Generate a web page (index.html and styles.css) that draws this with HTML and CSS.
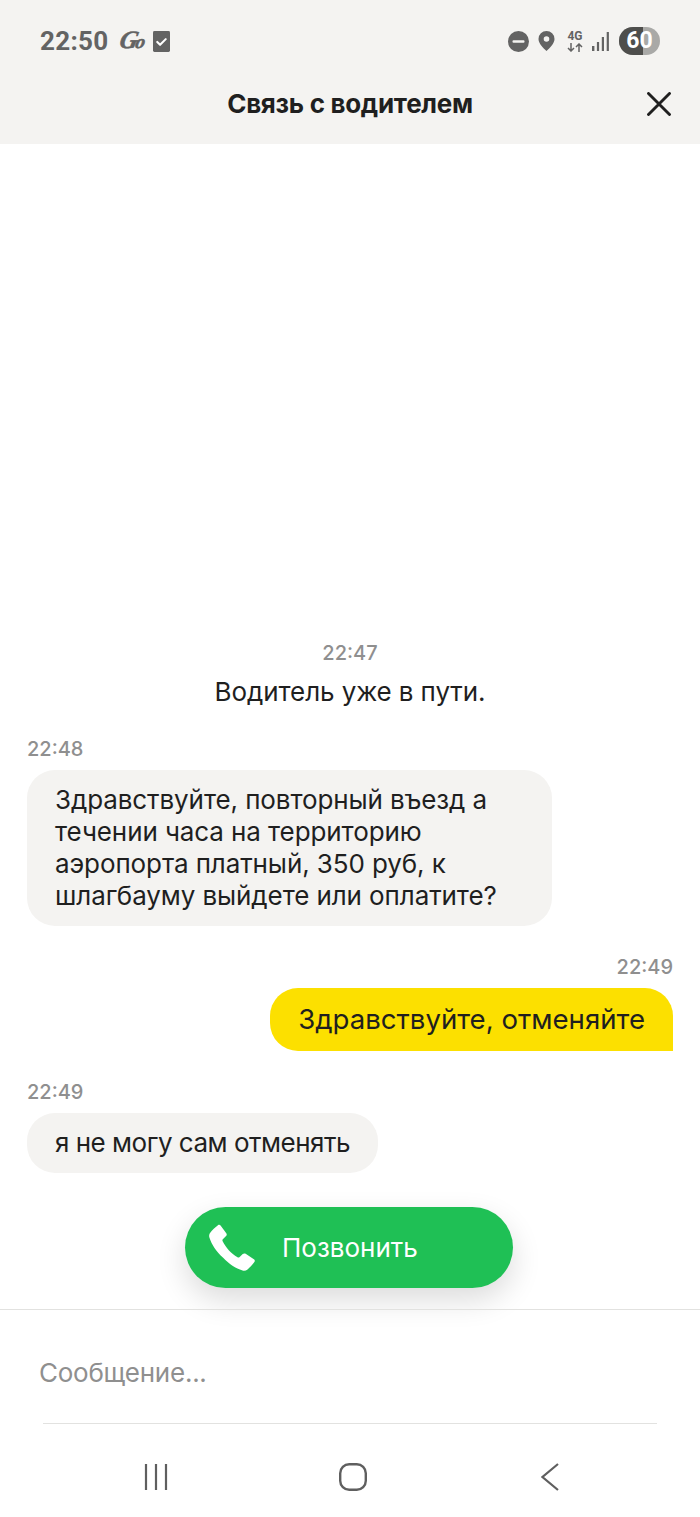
FILE: index.html
```html
<!DOCTYPE html>
<html lang="ru">
<head>
<meta charset="UTF-8" />
<meta name="viewport" content="width=device-width, initial-scale=1" />
<title>Связь с водителем</title>
<link rel="stylesheet" href="styles.css">
</head>
<body>

<div class="screen">
  <!-- Status bar + title -->
  <div class="top">
    <div class="status">
      <div class="status-left">
        <span class="clock">22:50</span>
        <span class="go">G<span class="go-o">o</span></span>
        <svg class="check" viewBox="0 0 18 22" xmlns="http://www.w3.org/2000/svg">
          <rect width="18" height="22" rx="1.5" fill="#636363"/>
          <path d="M4.5 11.5l3 3 6-6" fill="none" stroke="#fff" stroke-width="2.2" stroke-linecap="round" stroke-linejoin="round"/>
        </svg>
      </div>
      <div class="status-right">
        <svg class="ic-dnd" viewBox="0 0 21 21" xmlns="http://www.w3.org/2000/svg">
          <circle cx="10.500" cy="10.500" r="10.500" fill="#636363"/>
          <rect x="4.500" y="9.300" width="12" height="2.400" rx="1" fill="#f4f3f1"/>
        </svg>
        <svg class="ic-pin" viewBox="0 0 16 20" xmlns="http://www.w3.org/2000/svg">
          <path fill-rule="evenodd" d="M8 0a8 8 0 0 1 8 8c0 4.500-4.600 8.900-8 12C4.600 16.900 0 12.500 0 8a8 8 0 0 1 8-8zm0 5.200a2.800 2.800 0 1 0 0 5.600 2.800 2.800 0 0 0 0-5.600z" fill="#636363"/>
        </svg>
        <div class="net">
          <span class="net-label">4G</span>
          <svg class="ic-arrows" viewBox="0 0 16 9" xmlns="http://www.w3.org/2000/svg">
            <path d="M4 0v8M1 5l3 3 3-3M12 9V1M9 4l3-3 3 3" fill="none" stroke="#636363" stroke-width="1.500"/>
          </svg>
        </div>
        <svg class="ic-signal" viewBox="0 0 17 19" xmlns="http://www.w3.org/2000/svg">
          <rect x="0" y="14" width="2.400" height="5" fill="#636363"/>
          <rect x="4.900" y="10" width="2.200" height="9" fill="#636363"/>
          <rect x="9.800" y="5" width="2.200" height="14" fill="#636363"/>
          <rect x="14.700" y="0" width="2.200" height="19" fill="#636363"/>
        </svg>
        <div class="battery"><div class="battery-fill"></div><span class="battery-num">60</span></div>
      </div>
    </div>
    <div class="titlebar">
      <h1>Связь с водителем</h1>
      <svg class="close" viewBox="0 0 24 24" xmlns="http://www.w3.org/2000/svg">
        <path d="M1.500 1.500l21 21M22.500 1.500l-21 21" stroke="#1f1f1f" stroke-width="2.900" stroke-linecap="round"/>
      </svg>
    </div>
  </div>

  <!-- Chat -->
  <div class="chat">
    <div class="system">
      <div class="time">22:47</div>
      <p>Водитель уже в пути.</p>
    </div>

    <div class="msg first">
      <div class="time">22:48</div>
      <div class="bubble">Здравствуйте, повторный въезд а течении часа на территорию аэропорта платный, 350 руб, к шлагбауму выйдете или оплатите?</div>
    </div>

    <div class="msg mine">
      <div class="time">22:49</div>
      <div class="bubble">Здравствуйте, отменяйте</div>
    </div>

    <div class="msg last">
      <div class="time">22:49</div>
      <div class="bubble">я не могу сам отменять</div>
    </div>

    <button class="call">
      <svg class="ic-phone" viewBox="0 0 48 48" xmlns="http://www.w3.org/2000/svg">
        <path d="M10.500 1.200c.9-.7 2-.5 2.700.4l5.300 7.200c.7.900.6 2-.2 2.800l-3.100 3c-.5.5-.6 1.100-.3 1.800 1.700 3.300 3.600 6.200 6 8.800 2.500 2.700 5.200 4.900 8.400 6.800.6.400 1.300.3 1.800-.2l3.200-3c.8-.7 1.900-.8 2.800-.2l7.900 5.200c1 .6 1.200 1.800.5 2.700-1.900 2.600-4.300 5.300-6.600 7.100-1.400 1.100-3 1.500-4.800 1-6.500-1.800-13-6.200-18.600-12.100C9 26.600 4.300 19.500 2.300 13c-.5-1.700-.2-3.200.8-4.600 1.800-2.500 4.800-5.300 7.400-7.200z" fill="#fff"/>
      </svg>
      <span>Позвонить</span>
    </button>
  </div>

  <!-- Input + nav -->
  <div class="bottom">
    <div class="input-row">Сообщение...</div>
    <div class="nav">
      <svg class="nav-recent" viewBox="0 0 26 26" xmlns="http://www.w3.org/2000/svg">
        <path d="M2 0v26M12 0v26M22 0v26" stroke="#5f5f5f" stroke-width="2.200"/>
      </svg>
      <svg class="nav-home" viewBox="0 0 28 28" xmlns="http://www.w3.org/2000/svg">
        <rect x="1.200" y="1.200" width="25.600" height="25.600" rx="9" fill="none" stroke="#5f5f5f" stroke-width="2.400"/>
      </svg>
      <svg class="nav-back" viewBox="0 0 18 28" xmlns="http://www.w3.org/2000/svg">
        <path d="M17 1L1.500 14 17 27" fill="none" stroke="#5f5f5f" stroke-width="2.200"/>
      </svg>
    </div>
  </div>
</div>

</body>
</html>
```

FILE: styles.css
```css
* {
  box-sizing: border-box;
}
html, body {
  margin: 0;
  padding: 0;
  background: #fff;
}
body {
  font-family: 'Inter', 'Noto Sans', sans-serif;
  color: #1f1f1f;
}
.screen {
  width: 700px;
  height: 1517px;
  display: flex;
  flex-direction: column;
  overflow: hidden;
}
.top {
  background: #f4f3f1;
  height: 144px;
  flex: none;
}
.status {
  height: 82px;
  padding: 27px 40px 0;
  display: flex;
  justify-content: space-between;
  align-items: flex-start;
}
.status-left {
  display: flex;
  align-items: center;
  height: 26px;
  margin-top: 1px;
}
.clock {
  font-family: 'Roboto', sans-serif;
  font-size: 26px;
  font-weight: 700;
  color: #636363;
  letter-spacing: 0.3px;
}
.go {
  font-family: 'Liberation Serif', serif;
  font-style: italic;
  font-weight: 700;
  font-size: 25px;
  line-height: 26px;
  color: #636363;
  margin-left: 11px;
  width: 24px;
  letter-spacing: -2px;
  -webkit-text-stroke: 0.6px #636363;
  transform: skewX(-12deg);
}
.go-o {
  font-size: 19px;
}
.check {
  width: 17px;
  height: 21px;
  margin-left: 9px;
}
.status-right {
  display: flex;
  align-items: center;
  height: 28px;
}
.ic-dnd {
  width: 21px;
  height: 21px;
}
.ic-pin {
  width: 17px;
  height: 20px;
  margin-left: 9px;
}
.net {
  width: 16px;
  margin-left: 12px;
  display: flex;
  flex-direction: column;
  align-items: center;
}
.net-label {
  font-family: 'Roboto', sans-serif;
  font-weight: 700;
  font-size: 12px;
  line-height: 11px;
  color: #636363;
}
.ic-arrows {
  width: 16px;
  height: 9px;
  margin-top: 1px;
}
.ic-signal {
  width: 17px;
  height: 19px;
  margin-left: 9px;
}
.battery {
  position: relative;
  width: 41px;
  height: 28px;
  margin-left: 10px;
  border-radius: 14px;
  background: #a9a9a7;
  overflow: hidden;
  text-align: center;
}
.battery-fill {
  position: absolute;
  left: 0;
  top: 0;
  bottom: 0;
  width: 24px;
  background: #4e4e4c;
}
.battery-num {
  position: relative;
  font-family: 'Roboto', sans-serif;
  font-weight: 700;
  font-size: 23px;
  line-height: 28px;
  color: #fff;
}
.titlebar {
  position: relative;
  height: 62px;
  display: flex;
  align-items: center;
  justify-content: center;
}
.titlebar h1 {
  margin: 0 0 20px;
  font-size: 26px;
  font-weight: 700;
  letter-spacing: -0.3px;
  color: #1f1f1f;
}
.close {
  position: absolute;
  right: 29px;
  top: 10px;
  width: 24px;
  height: 24px;
}
.chat {
  flex: 1;
  display: flex;
  flex-direction: column;
  justify-content: flex-end;
  padding: 0 27px;
}
.time {
  font-size: 20px;
  font-weight: 500;
  color: #8f8f8f;
  line-height: 24px;
}
.system {
  text-align: center;
  margin-bottom: 29px;
}
.system p {
  margin: 11px 0 0;
  font-size: 26px;
  line-height: 32px;
  letter-spacing: -0.1px;
}
.msg {
  margin-bottom: 30px;
  display: flex;
  flex-direction: column;
  align-items: flex-start;
}
.msg .time {
  margin-bottom: 9px;
}
.bubble {
  background: #f4f3f1;
  border-radius: 28px;
  padding: 14px 28px;
  font-size: 26px;
  line-height: 32px;
  max-width: 525px;
}
.msg.first {
  margin-bottom: 29px;
}
.first .bubble {
  letter-spacing: -0.1px;
}
.msg.mine {
  align-items: flex-end;
  margin-bottom: 29px;
}
.mine .bubble {
  background: #fce000;
  border-bottom-right-radius: 0;
  padding: 15px 28px 16px;
  font-size: 27.6px;
}
.last .bubble {
  letter-spacing: -0.5px;
}
.call {
  align-self: center;
  width: 328px;
  height: 81px;
  margin: 4px 2px 21px 0;
  border: none;
  border-radius: 41px;
  background: #1fc055;
  box-shadow: 0 12px 30px rgba(0,0,0,0.14);
  color: #fff;
  font-family: 'Inter', sans-serif;
  font-size: 26px;
  display: flex;
  align-items: center;
  padding: 0 0 0 22px;
}
.ic-phone {
  width: 50px;
  height: 50px;
  flex: none;
  margin-top: 2px;
}
.call span {
  margin-left: 25px;
}
.bottom {
  flex: none;
  height: 208px;
  border-top: 1px solid #e2e2e0;
}
.input-row {
  margin: 0 43px;
  height: 114px;
  padding-top: 47px;
  border-bottom: 1px solid #e2e2e0;
  font-size: 26px;
  line-height: 32px;
  color: #8f8f8f;
  text-indent: -4px;
  letter-spacing: -0.25px;
}
.nav {
  height: 93px;
  padding-top: 13px;
  display: flex;
  align-items: center;
}
.nav-recent {
  width: 26px;
  height: 26px;
  margin-left: 144px;
}
.nav-home {
  width: 28px;
  height: 28px;
  margin-left: 169px;
}
.nav-back {
  width: 18px;
  height: 28px;
  margin-left: 174px;
}
```
